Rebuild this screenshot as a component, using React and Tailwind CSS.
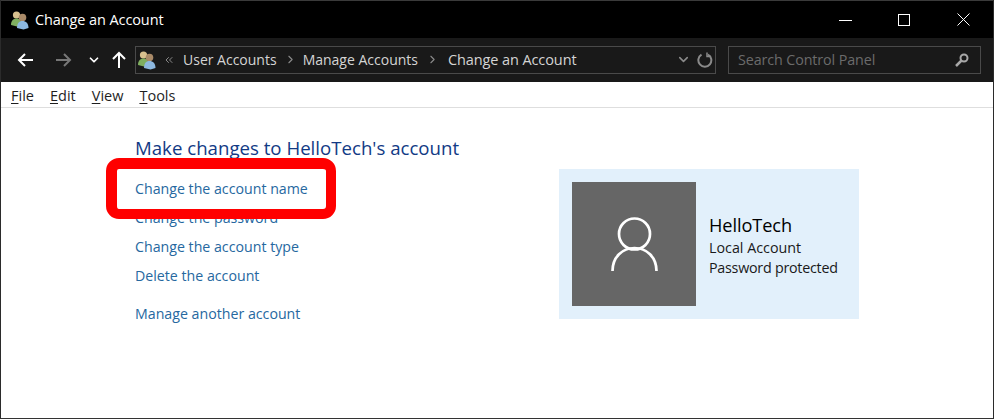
import { ChevronDown, ChevronRight, ChevronsLeft } from "lucide-react";

const font = "font-['Open_Sans','Noto_Sans',sans-serif]";

const links = ["Change the account name", "Change the password", "Change the account type", "Delete the account"];

// two little people, the Control Panel user accounts icon
function UsersIcon() {
  return (
    <svg width="20" height="20" viewBox="0 0 20 20">
      <circle cx="6.5" cy="5" r="3.6" fill="#d8c08e" />
      <path d="M1 15c0-4 2-6.5 5.5-6.5S12 11 12 15l-5 1.5z" fill="#7fae5f" />
      <circle cx="12.5" cy="7.5" r="3.8" fill="#a98a68" />
      <path d="M7 18c0-4.500 2-7 5.500-7s6 2.500 6 7l-5 1.500z" fill="#8db8e0" />
    </svg>
  );
}

function Arrow({ className, flip }) {
  return (
    <svg width="16" height="14" viewBox="0 0 16 14" className={`${className} ${flip ? "rotate-180" : ""}`} fill="none" stroke="currentColor" strokeWidth="2">
      <path d="M16 7H2M8 1L2 7l6 6" />
    </svg>
  );
}

function Menu({ first, rest }) {
  return (
    <span>
      <span className="underline underline-offset-2">{first}</span>
      {rest}
    </span>
  );
}

export default function App() {
  return (
    <div className={`${font} relative w-[994px] h-[419px] overflow-hidden bg-white border border-t-0 border-[#2b2b2b] border-b-[#333]`}>
      {/* Title bar */}
      <div className="h-[38px] bg-black border-t border-[#3a3a3a] flex items-center text-white">
        <div className="ml-[9px]"><UsersIcon /></div>
        <span className="ml-[5px] text-[14.5px] tracking-[-0.1px]">Change an Account</span>
        <div className="ml-auto flex items-center pr-[23px]">
          <svg width="13" height="14" viewBox="0 0 13 14" stroke="#fff" fill="none" className="mr-[46px]"><path d="M0 7.500h13" /></svg>
          <svg width="12" height="12" viewBox="0 0 12 12" stroke="#fff" fill="none" className="mr-[47px]"><rect x=".5" y=".5" width="11" height="11" /></svg>
          <svg width="13" height="13" viewBox="0 0 13 13" stroke="#fff" fill="none"><path d="M.5.5l12 12M12.500.5l-12 12" /></svg>
        </div>
      </div>

      {/* Address bar */}
      <div className="h-[44px] bg-[#191919] flex items-center">
        <Arrow className="ml-[16px] text-white" />
        <Arrow flip className="ml-[23px] text-[#777]" />
        <ChevronDown size={14} strokeWidth={3} className="ml-[15px] text-white" />
        <svg width="14" height="18" viewBox="0 0 14 18" fill="none" stroke="#fff" strokeWidth="2" className="ml-[11px]">
          <path d="M7 17V2M1 8l6-6 6 6" />
        </svg>
        <div className="ml-[9px] w-[581px] h-[28px] border border-[#4a4a4a] flex items-center pb-[1px] text-[14px] text-[#d4d4d4]">
          <div className="ml-[1px]"><UsersIcon /></div>
          <ChevronsLeft size={12} className="ml-[6px] text-[#8a8a8a]" />
          <span className="ml-[8px]">User Accounts</span>
          <ChevronRight size={13} className="ml-[7px] text-[#8a8a8a]" />
          <span className="ml-[6px]">Manage Accounts</span>
          <ChevronRight size={13} className="ml-[8px] text-[#8a8a8a]" />
          <span className="ml-[9px] text-[14.5px] tracking-[-0.1px]">Change an Account</span>
          <ChevronDown size={15} strokeWidth={2.500} className="ml-auto text-[#8a8a8a]" />
          <svg width="16" height="16" viewBox="0 0 16 16" fill="none" stroke="#8a8a8a" strokeWidth="2" className="ml-[6px] mr-[2px]">
            <path d="M11 2.500A6.500 6.500 0 1 1 4.500 2.600" />
            <path d="M10 .5v4h4" strokeWidth="1.500" />
          </svg>
        </div>
        <div className="ml-[12px] w-[253px] h-[28px] border border-[#4a4a4a] flex items-center justify-between pl-[9px] pr-[11px] text-[14.3px] text-[#6b6b6b]">
          <span className="tracking-[-0.1px]">Search Control Panel</span>
          <svg width="14" height="14" viewBox="0 0 14 14" fill="none" stroke="#a8a8a8" strokeWidth="2">
            <circle cx="9" cy="5" r="3.500" />
            <path d="M6.500 7.500L1 13" strokeWidth="2.500" />
          </svg>
        </div>
      </div>

      {/* Menu */}
      <div className="h-[26px] border-b border-[#dedede] flex items-center pl-[10px] pt-[2px] gap-[16px] text-[14.5px] text-[#1e1e1e]">
        <Menu first="F" rest="ile" />
        <Menu first="E" rest="dit" />
        <Menu first="V" rest="iew" />
        <Menu first="T" rest="ools" />
      </div>

      {/* Content */}
      <div className="flex">
        <div className="ml-[134px] w-[424px] pt-[27px]">
          <h1 className="text-[18.650px] leading-[26px] text-[#123a85]">Make changes to HelloTech's account</h1>
          <div className="mt-[13px] flex flex-col text-[14.200px] leading-[29px] text-[#26689f]">
            {links.map((l) => (
              <a key={l}>{l}</a>
            ))}
            <a className="mt-[9px]">Manage another account</a>
          </div>
        </div>
        <div className="mt-[61px] w-[300px] h-[150px] bg-[#e2f0fb] p-[13px] flex items-center">
          <div className="w-[124px] h-[124px] bg-[#666666] flex items-center justify-center">
            <svg width="47" height="54" viewBox="0 0 47 54" fill="none" stroke="#fff" strokeWidth="2.700">
              <circle cx="23.500" cy="17" r="15.500" />
              <path d="M1.500 54c0-14 10-23 22-23s22 9 22 23" />
            </svg>
          </div>
          <div className="ml-[13px] pt-[3px] text-[#1a1a1a]">
            <div className="text-[18.200px] leading-[24px] tracking-[-0.1px] text-black">HelloTech</div>
            <div className="text-[14.300px] leading-[20px] mt-[1px]">Local Account</div>
            <div className="text-[14.300px] leading-[20px] tracking-[-0.25px]">Password protected</div>
          </div>
        </div>
      </div>

      {/* Red callout drawn over the screenshot */}
      <div className="absolute left-[105px] top-[158px] w-[230px] h-[61px] border-[10px] border-t-[11px] border-l-[11px] border-[#ff0000] rounded-[13px]" />
    </div>
  );
}
